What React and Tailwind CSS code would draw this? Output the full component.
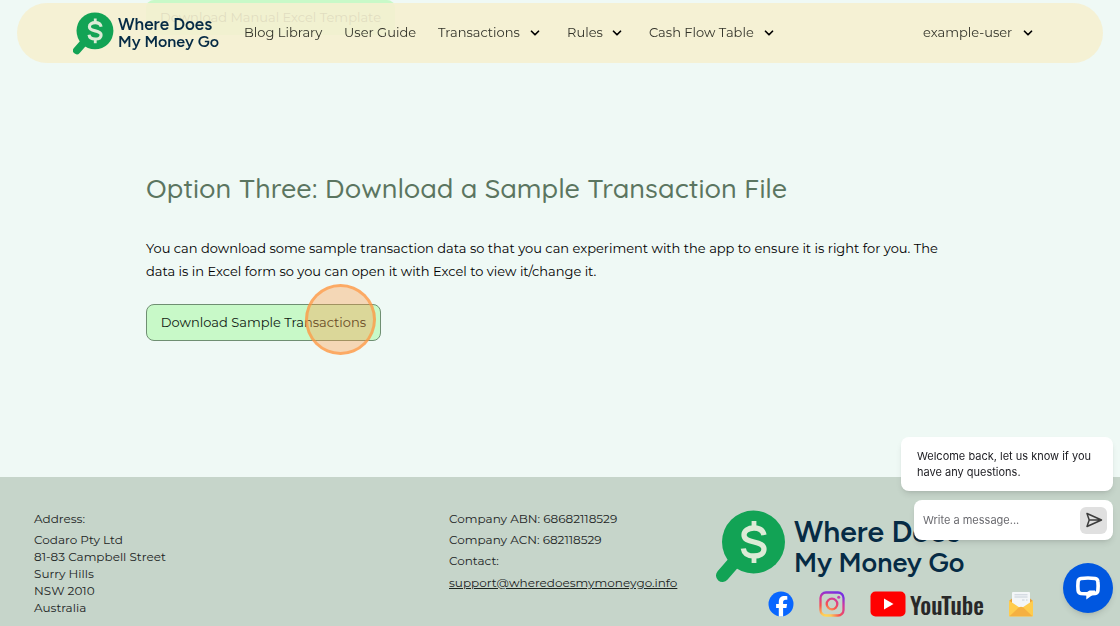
import { ChevronDown } from 'lucide-react';

const menus = [
  { label: 'Transactions', width: 'w-[104px]' },
  { label: 'Rules', width: 'w-[57px]' },
  { label: 'Cash Flow Table', width: 'w-[127px]' },
];

const address = ['Codaro Pty Ltd', '81-83 Campbell Street', 'Surry Hills', 'NSW 2010', 'Australia'];

function LogoMark({ className }) {
  return (
    <svg viewBox="0 0 70 73" className={className} aria-hidden="true">
      <path d="M20 50 L6.500 65.500" stroke="#12a355" strokeWidth="13" strokeLinecap="round" />
      <circle cx="37.500" cy="32" r="31.500" fill="#12a355" />
      <g fill="none" stroke="#dcebd6" strokeLinecap="butt">
        <path d="M38 11 V18 M38 46 V53" strokeWidth="4.800" />
        <path
          d="M48 25 C47 20 43 18 38 18 C32 18 28 21 28 25 C28 29.500 32.500 30.800 38 32 C43.800 33.300 48 34.800 48 39 C48 43.500 44 46 38 46 C32 46 28 43.500 27.300 38.500"
          strokeWidth="5.300"
        />
      </g>
    </svg>
  );
}

function FacebookIcon() {
  return (
    <svg viewBox="0 0 26 26" className="size-[26px]" aria-hidden="true">
      <circle cx="13" cy="13" r="12.500" fill="#0866ff" />
      <path
        d="M10.800 25.400 V17 H8.100 V13 H10.800 V11.300 C10.800 6.900 12.800 5 16.900 5 C17.700 5 18.800 5.100 19.300 5.300 V8.800 C19 8.800 18.500 8.700 17.900 8.700 C15.900 8.700 15.100 9.500 15.100 11.300 V13 H19.100 L18.400 17 H15.100 V25.400 Z"
        fill="#fff"
      />
    </svg>
  );
}

function InstagramIcon() {
  return (
    <svg viewBox="0 0 26 26" className="size-[26px]" aria-hidden="true">
      <defs>
        <radialGradient id="insta" gradientUnits="userSpaceOnUse" cx="7" cy="27" r="27">
          <stop offset="0" stopColor="#ffdd55" />
          <stop offset="0.2" stopColor="#ffc855" />
          <stop offset="0.5" stopColor="#f9544e" />
          <stop offset="0.8" stopColor="#d0389f" />
          <stop offset="1" stopColor="#7a30e0" />
        </radialGradient>
      </defs>
      <g fill="none" stroke="url(#insta)" strokeWidth="2.300">
        <rect x="1.500" y="1.500" width="23" height="23" rx="5.500" />
        <circle cx="13" cy="13" r="5.300" />
      </g>
      <circle cx="19.700" cy="6.300" r="1.500" fill="#c83bb0" />
    </svg>
  );
}

function YoutubeIcon() {
  return (
    <svg viewBox="0 0 36 26" className="h-[26px] w-9 shrink-0" aria-hidden="true">
      <rect x="0.500" y="0.500" width="35" height="25" rx="5" fill="#f00" />
      <path d="M14 7.500 L23.500 13 L14 18.500 Z" fill="#fff" />
    </svg>
  );
}

function MailIcon() {
  return (
    <svg viewBox="0 0 26 26" className="size-[26px]" aria-hidden="true">
      <path d="M1 10 L4 7.500 H22 L25 10 V25 H1 Z" fill="#e9a23b" />
      <rect x="4" y="1" width="18" height="18" rx="1" fill="#f3f6f8" />
      <path d="M6.500 3.800 H19.500 M6.500 6 H19.500 M14 9 H16.500 M18 9 H19.500" stroke="#c3ccd6" strokeWidth="0.900" />
      <path d="M1 9.500 L13 17.500 L25 9.500 V24.500 Q25 25.500 24 25.500 H2 Q1 25.500 1 24.500 Z" fill="#ffcc4d" />
      <path d="M1.500 25.200 L11 16.300 L13 15.800 L15 16.300 L24.500 25.200 Z" fill="#f5b041" />
    </svg>
  );
}

function SendIcon() {
  return (
    <svg viewBox="0 0 18 18" className="size-[18px]" fill="none" stroke="#3c3c3c" strokeWidth="1.500" strokeLinejoin="round" aria-hidden="true">
      <path d="M2 2.500 L16.500 9 L2 15.500 L4.200 9 Z M4.200 9 H16" />
    </svg>
  );
}

function ChatIcon() {
  return (
    <svg viewBox="0 0 26 26" className="size-[26px]" aria-hidden="true">
      <path
        d="M6 3.500 Q13 2.500 20 3.500 Q22.700 4 22.900 6.500 Q23.400 11 22.900 15.500 Q22.600 18 20 18.500 Q13 19.300 6 18.500 Q3.400 18 3.100 15.500 Q2.600 11 3.100 6.500 Q3.400 4 6 3.500 Z"
        fill="none"
        stroke="#fff"
        strokeWidth="3.600"
      />
      <path d="M11.300 17.500 L14.500 15.500 H20 V19.500 L17.500 20 L11.300 24.500 Z" fill="#fff" />
    </svg>
  );
}

function NavMenu({ label, width }) {
  return (
    <button type="button" className={`flex items-center justify-between ${width}`}>
      {label}
      <ChevronDown className="size-3.5 text-black" strokeWidth={3} />
    </button>
  );
}

function Header() {
  return (
    <header className="fixed inset-x-[17px] top-[3px] flex h-[60px] items-center rounded-full bg-[#f5f0d0]/90 pr-[68px] pl-14 text-[13px] text-[#33342a]">
      <a href="#home" className="flex w-[171px] items-center gap-1">
        <LogoMark className="h-[43px] w-[41px] shrink-0" />
        <span className="font-['Figtree','Lato',sans-serif] font-semibold whitespace-nowrap text-[#062b45]">
          <span className="block text-[17px] leading-[18px]">Where Does</span>
          <span className="block text-base leading-[18px]">My Money Go</span>
        </span>
      </a>
      <nav className="flex items-center">
        <a href="#blog" className="w-[100px]">Blog Library</a>
        <a href="#guide" className="w-[94px]">User Guide</a>
        <div className="flex gap-[25px]">
          {menus.map((menu) => (
            <NavMenu key={menu.label} {...menu} />
          ))}
        </div>
      </nav>
      <div className="ml-auto">
        <NavMenu label="example-user" width="w-28" />
      </div>
    </header>
  );
}

function DownloadButton({ children, className }) {
  return (
    <button type="button" className={`block rounded-lg bg-[#c8f9c8] text-[13px] ${className}`}>
      {children}
    </button>
  );
}

function Footer() {
  return (
    <footer className="flex bg-[#c6d5ca] px-[34px] pt-[31px] pb-[9px] text-xs text-[#1c241f]">
      <div className="w-[415px] shrink-0">
        <p className="leading-[21px]">Address:</p>
        <address className="mt-0.5 leading-[17px] not-italic">
          {address.map((line) => (
            <span key={line} className="block">{line}</span>
          ))}
        </address>
      </div>
      <div className="w-[267px] shrink-0 leading-[21px]">
        <p>Company ABN: 68682118529</p>
        <p>Company ACN: 682118529</p>
        <p>Contact:</p>
        <a href="mailto:support@wheredoesmymoneygo.info" className="mt-px block underline">
          support@wheredoesmymoneygo.info
        </a>
      </div>
      <div className="shrink-0">
        <a href="#home" className="mt-0.5 flex items-center gap-2">
          <LogoMark className="h-[73px] w-[70px]" />
          <span className="font-['Figtree','Lato',sans-serif] font-semibold whitespace-nowrap text-[#062b45]">
            <span className="block text-[30px] leading-[31px]">Where Does</span>
            <span className="block text-[27px] leading-[31px]">My Money Go</span>
          </span>
        </a>
        <div className="mt-2 flex items-center gap-[25px] pl-[52px]">
          <a href="#facebook" aria-label="Facebook"><FacebookIcon /></a>
          <a href="#instagram" aria-label="Instagram"><InstagramIcon /></a>
          <a href="#youtube" className="flex h-[26px] w-[113px] items-center gap-1 font-['Oswald','Roboto_Condensed','Liberation_Sans_Narrow',sans-serif] text-2xl leading-none font-medium text-[#282828]">
            <YoutubeIcon />
            YouTube
          </a>
          <a href="#mail" aria-label="Email"><MailIcon /></a>
        </div>
      </div>
    </footer>
  );
}

function ChatWidget() {
  return (
    <aside className="fixed right-[7px] bottom-[13px] flex flex-col items-end font-['Inter',sans-serif] text-[11px]">
      <p className="w-[212px] rounded-lg bg-white py-[11px] pr-3 pl-4 leading-4 text-[#1b1b20] shadow-md">
        Welcome back, let us know if you have any questions.
      </p>
      <form className="mt-[9px] flex h-10 w-[199px] items-center rounded-lg bg-white pr-1.5 pl-[9px] shadow-md">
        <input aria-label="Write a message" placeholder="Write a message..." className="min-w-0 flex-1 outline-none placeholder:text-[#6a6a6f]" />
        <button type="button" aria-label="Send" className="flex size-[27px] items-center justify-center rounded-md bg-[#e0e0e0]">
          <SendIcon />
        </button>
      </form>
      <button type="button" aria-label="Open chat" className="mt-[23px] flex size-[50px] items-center justify-center rounded-full bg-[#0057e0] shadow-md">
        <ChatIcon />
      </button>
    </aside>
  );
}

export default function App() {
  return (
    <div className="flex min-h-screen flex-col overflow-hidden bg-[#eff9f5] font-['Montserrat','Inter',sans-serif]">
      <Header />
      <main className="flex-1 px-[146px] pb-[136px]">
        <DownloadButton className="h-[35px] w-[249px] text-[#26302a]">Download Manual Excel Template</DownloadButton>
        <h1 className="mt-[133px] font-['Quicksand','Montserrat',sans-serif] text-[27px] leading-10 font-medium text-[#5b7560]">
          Option Three: Download a Sample Transaction File
        </h1>
        <p className="mt-[29px] max-w-[824px] text-[13px] leading-[23px] text-black">
          You can download some sample transaction data so that you can experiment with the app to ensure it is right
          for you. The data is in Excel form so you can open it with Excel to view it/change it.
        </p>
        <div className="relative mt-[21px] w-[235px]">
          <DownloadButton className="h-[37px] w-full border border-[#6f8f72] text-[#101a12]">
            Download Sample Transactions
          </DownloadButton>
          {/* click marker */}
          <span className="pointer-events-none absolute -top-5 right-[5px] size-[71px] rounded-full border-[3px] border-[#ff9742]/70 bg-[#ff9742]/35" />
        </div>
      </main>
      <Footer />
      <ChatWidget />
    </div>
  );
}
